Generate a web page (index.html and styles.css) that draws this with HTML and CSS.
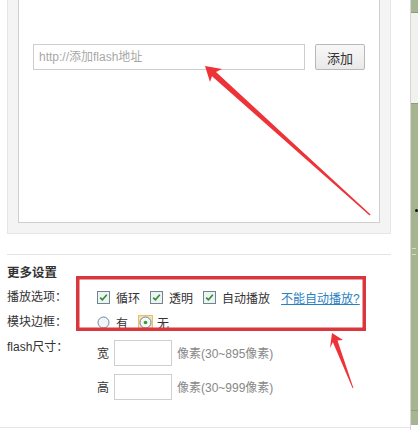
FILE: index.html
```html
<!DOCTYPE html>
<html lang="zh-CN">
<head>
<meta charset="utf-8">
<title>flash</title>
<link rel="stylesheet" href="styles.css">
</head>
<body>
<div class="page">
  <div class="main">
    <div class="panel">
      <div class="box">
        <div class="addrow">
          <input class="url" type="text" placeholder="http://添加flash地址">
          <button class="btn" type="button">添加</button>
        </div>
      </div>
    </div>
    <div class="sep"></div>
    <div class="settings">
      <div class="title">更多设置</div>
      <div class="row">
        <span class="lbl">播放选项：</span>
        <div class="opts">
          <span class="opt"><svg class="cb" width="13" height="13" viewBox="0 0 13 13"><rect x="0.5" y="0.5" width="12" height="12" fill="#eef3ee" stroke="#6f8595"/><path d="M3.2 6.6 L5.4 8.8 L9.8 3.8" fill="none" stroke="#2f8b3b" stroke-width="1.6"/></svg><span class="otext">循环</span></span>
          <span class="opt"><svg class="cb" width="13" height="13" viewBox="0 0 13 13"><rect x="0.5" y="0.5" width="12" height="12" fill="#eef3ee" stroke="#6f8595"/><path d="M3.2 6.6 L5.4 8.8 L9.8 3.8" fill="none" stroke="#2f8b3b" stroke-width="1.6"/></svg><span class="otext">透明</span></span>
          <span class="opt"><svg class="cb" width="13" height="13" viewBox="0 0 13 13"><rect x="0.5" y="0.5" width="12" height="12" fill="#eef3ee" stroke="#6f8595"/><path d="M3.2 6.6 L5.4 8.8 L9.8 3.8" fill="none" stroke="#2f8b3b" stroke-width="1.6"/></svg><span class="otext">自动播放</span></span>
          <a class="link" href="#">不能自动播放?</a>
        </div>
      </div>
      <div class="row">
        <span class="lbl">模块边框：</span>
        <div class="opts">
          <span class="opt"><svg class="rb" width="13" height="13" viewBox="0 0 13 13"><circle cx="6.5" cy="6.5" r="5.5" fill="#f1f5f8" stroke="#6a86a0"/></svg><span class="otext">有</span></span>
          <span class="opt"><span class="rbhover"><svg class="rb" width="13" height="13" viewBox="0 0 13 13"><circle cx="6.5" cy="6.5" r="5.5" fill="#f6f8f6" stroke="#6a86a0"/><circle cx="6.5" cy="6.5" r="1.8" fill="#2f9a3b"/></svg></span><span class="otext near">无</span></span>
        </div>
      </div>
      <div class="row sizes">
        <span class="lbl">flash尺寸：</span>
        <div class="sizecol">
          <div class="sizerow"><span class="dim">宽</span><input class="num" type="text"><span class="hint">像素(30~895像素)</span></div>
          <div class="sizerow"><span class="dim">高</span><input class="num" type="text"><span class="hint">像素(30~999像素)</span></div>
        </div>
      </div>
    </div>
    <div class="bottomline"></div>
  </div>
  <div class="scroll">
    <div class="sb-up"></div>
    <div class="sb-track"></div>
    <div class="sb-thumb"><span class="grip"></span></div>
    <div class="sb-down"></div>
  </div>
  <span class="dot"></span>
  <svg class="overlay" width="418" height="430" viewBox="0 0 418 430">
    <rect x="77.75" y="277.75" width="286.5" height="51.5" fill="none" stroke="#d9363d" stroke-width="3.5"/>
    <polygon fill="#ee3338" points="205,66 222,69 216,72 370.6,214.6 369.6,215.6 212,76.2 210,82"/>
    <polygon fill="#ee3338" points="332,333 343,340 337.5,340.5 353.4,388 352.6,388.2 332.9,342.3 330,348"/>
  </svg>
</div>
</body>
</html>
```

FILE: styles.css
```css
html, body {
  margin: 0;
  padding: 0;
  background: #fff;
}
body {
  font-family: "Liberation Sans", "Noto Sans CJK SC", sans-serif;
  font-size: 12px;
  color: #333;
}
.page {
  position: relative;
  width: 418px;
  height: 430px;
  overflow: hidden;
  display: flex;
}
.main {
  width: 410px;
  flex: none;
}
.panel {
  margin-left: 7px;
  width: 362px;
  padding: 0 10px 10px 10px;
  background: #f4f4f4;
  border: 1px solid #e6e6e6;
  border-top: none;
}
.box {
  height: 222px;
  background: #fff;
  border: 1px solid #cfcfcf;
  border-top: none;
}
.addrow {
  display: flex;
  align-items: center;
  padding: 44px 0 0 14px;
}
.url {
  box-sizing: border-box;
  width: 272px;
  height: 26px;
  margin: 0;
  padding: 0 5px;
  border: 1px solid #cdcdcd;
  font-family: "Liberation Sans", "Noto Sans CJK SC", sans-serif;
  font-size: 12px;
  color: #333;
  outline: none;
}
.url::placeholder {
  color: #a8a8a8;
}
.btn {
  box-sizing: border-box;
  width: 50px;
  height: 26px;
  margin: 0 0 0 10px;
  padding: 0;
  border: 1px solid #b8b8b8;
  border-radius: 2px;
  background: linear-gradient(#f8f8f8, #e9e9e9);
  font-family: "Liberation Sans", "Noto Sans CJK SC", sans-serif;
  font-size: 13px;
  color: #333;
}
.sep {
  margin: 20px 0 0 7px;
  width: 384px;
  height: 1px;
  background: #e3e3e3;
}
.settings {
  padding-left: 7px;
}
.title {
  margin-top: 10px;
  margin-bottom: 4px;
  line-height: 16px;
  font-size: 12.5px;
  font-weight: bold;
  color: #333;
}
.row {
  display: flex;
  align-items: center;
  height: 25px;
}
.lbl {
  width: 90px;
  flex: none;
  line-height: 25px;
  color: #333;
}
.opts {
  display: flex;
  align-items: center;
}
.opt {
  display: flex;
  align-items: center;
  margin-right: 10px;
}
.cb, .rb {
  display: block;
  flex: none;
}
.otext {
  margin-left: 6px;
  color: #333;
}
.otext.near {
  margin-left: 4px;
}
.rbhover {
  display: flex;
  align-items: center;
  justify-content: center;
  width: 15px;
  height: 15px;
  margin-left: 0;
  background: #f6e1b0;
  border: 1px solid #e7c06e;
  box-sizing: border-box;
}
.link {
  margin-left: 1px;
  color: #2a7fbf;
  text-decoration: underline;
}
.row.sizes {
  align-items: flex-start;
  height: auto;
}
.sizecol {
  display: flex;
  flex-direction: column;
  gap: 9px;
  padding-top: 5px;
}
.sizerow {
  display: flex;
  align-items: center;
  height: 25px;
}
.dim {
  width: 17px;
  color: #333;
}
.num {
  box-sizing: border-box;
  width: 58px;
  height: 26px;
  margin: 0 5px 0 0;
  padding: 0;
  border: 1px solid #cfcfcf;
  outline: none;
}
.hint {
  color: #888;
}
.bottomline {
  margin: 28px 0 0 0;
  width: 410px;
  height: 1px;
  background: #e6e6e6;
}
.scroll {
  width: 7px;
  flex: none;
  border-left: 1px solid #d6d6d6;
  display: flex;
  flex-direction: column;
}
.sb-up {
  height: 12px;
  background: #a6b692;
  border-bottom: 1px solid #8d9d7a;
}
.sb-track {
  height: 90px;
  background: #f1f1ed;
}
.sb-thumb {
  position: relative;
  height: 306px;
  background: #a5b58f;
  border-top: 1px solid #8e9e7b;
  border-bottom: 1px solid #8e9e7b;
}
.grip {
  position: absolute;
  left: 1px;
  top: 144px;
  width: 4px;
  height: 5px;
  border-top: 1px solid #d4dcc6;
  border-bottom: 1px solid #d4dcc6;
}
.sb-down {
  height: 14px;
  background: #a6b692;
}
.dot {
  position: absolute;
  left: 415px;
  top: 209px;
  width: 3px;
  height: 3px;
  border-radius: 50%;
  background: #111;
}
.overlay {
  position: absolute;
  left: 0;
  top: 0;
  pointer-events: none;
}
```
